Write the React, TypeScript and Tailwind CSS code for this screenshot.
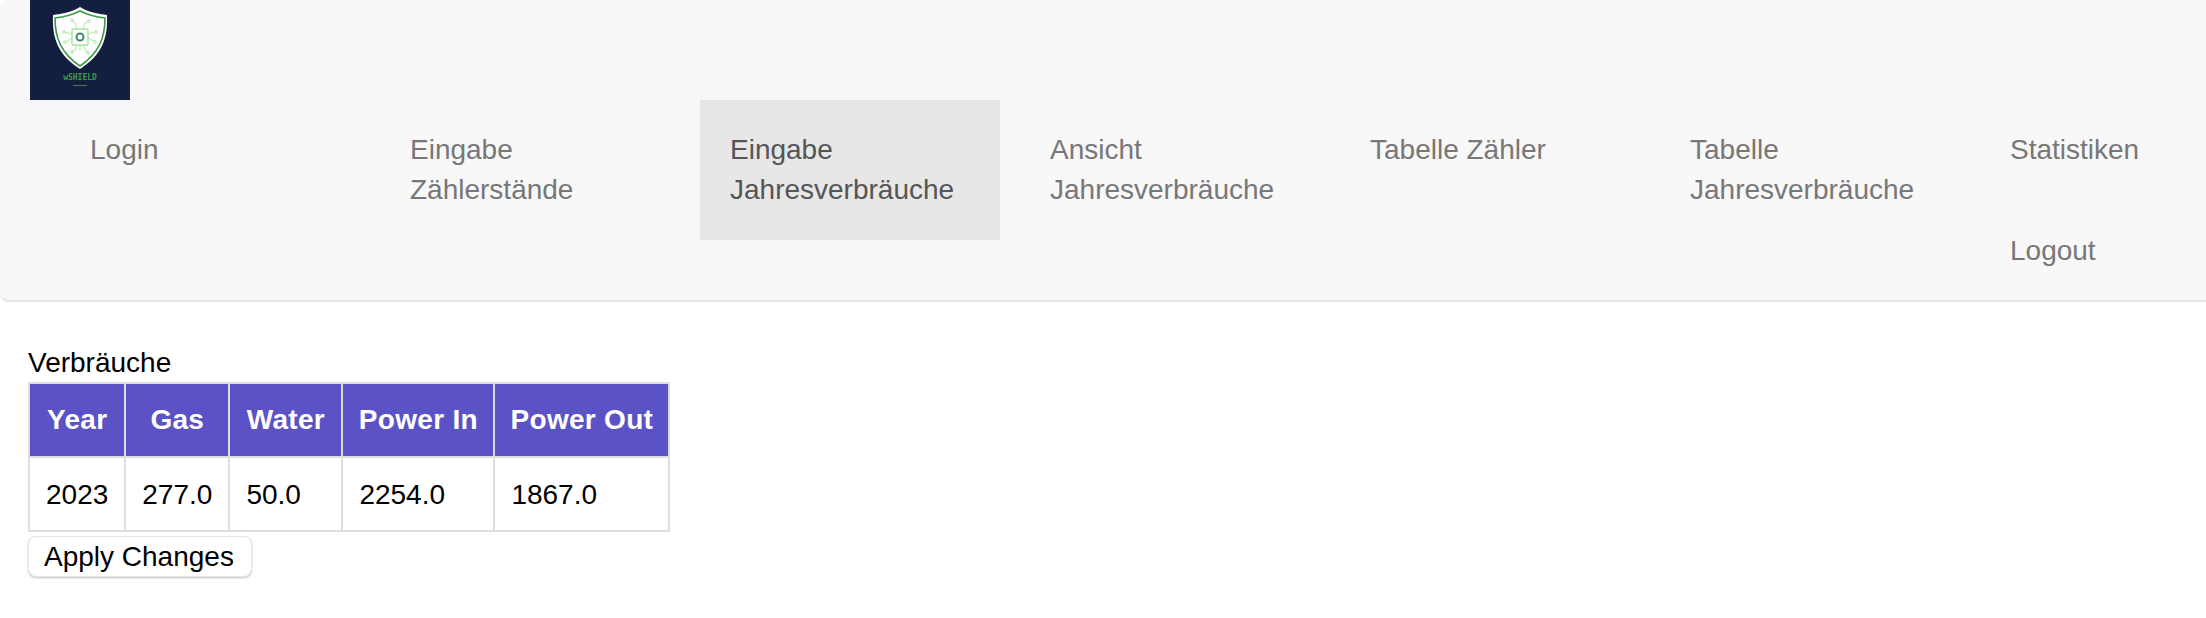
import React from 'react';

const navItems = [
  { label: 'Login' },
  { label: 'Eingabe Zählerstände' },
  { label: 'Eingabe Jahresverbräuche', active: true },
  { label: 'Ansicht Jahresverbräuche' },
  { label: 'Tabelle Zähler' },
  { label: 'Tabelle Jahresverbräuche' },
];

const columns = [
  { label: 'Year', width: 'w-[96px]' },
  { label: 'Gas', width: 'w-[104px]' },
  { label: 'Water', width: 'w-[113px]' },
  { label: 'Power In', width: 'w-[152px]' },
  { label: 'Power Out', width: 'w-[175px]' },
];
const values = ['2023', '277.0', '50.0', '2254.0', '1867.0'];

// drawn version of the shield logo
const Logo = () => (
  <svg viewBox="0 0 100 100" className="block w-[100px] h-[100px]">
    <rect width="100" height="100" fill="#141f3f" />
    <path d="M50 7 C58 12 68 14 77 15 C78 38 72 55 50 69 C28 55 22 38 23 15 C32 14 42 12 50 7Z" fill="#fff" />
    <path d="M50 11 C58 15 66 17 75 18 C75 38 69 53 50 66 C31 53 25 38 25 18 C34 17 42 15 50 11Z" fill="#fff" stroke="#3c9a4a" strokeWidth="1.6" />
    <g stroke="#a6e39a" strokeWidth="0.9" fill="none">
      <rect x="42" y="29" width="16" height="16" rx="1.5" strokeWidth="1.4" />
      <path d="M46 29 L46 24 L43 21 M54 29 L54 24 L58 22 M42 34 L35 32 M42 38 L36 42 M58 34 L65 32 M58 38 L64 41 M46 45 L46 49 L43 51 M50 45 L50 51 M54 45 L54 48 L57 52" />
      <circle cx="42" cy="20" r="1.4" />
      <circle cx="59" cy="21" r="1.4" />
      <circle cx="34" cy="32" r="1.4" />
      <circle cx="66" cy="32" r="1.4" />
      <circle cx="35" cy="42" r="1.4" />
      <circle cx="65" cy="42" r="1.4" />
      <circle cx="42" cy="52" r="1.4" />
      <circle cx="58" cy="53" r="1.4" />
    </g>
    <circle cx="50" cy="37" r="3.5" fill="none" stroke="#3f8a6a" strokeWidth="2" />
    <text x="50" y="80" textAnchor="middle" fontSize="8" fontWeight="bold" fill="#3c9a4a" fontFamily="'DejaVu Sans Mono', monospace">wSHIELD</text>
    <rect x="43" y="85" width="14" height="1" fill="#3c7a55" />
  </svg>
);

export default function App() {
  return (
    <div className="min-h-[618px] bg-white text-[28px] leading-[40px] text-black overflow-hidden font-['Liberation_Sans',Arial,sans-serif]">
      <nav className="h-[302px] w-[2230px] rounded-lg border-b-2 border-[#e7e7e7] bg-[#f8f8f8]">
        <div className="pl-[30px] h-[100px]">
          <Logo />
        </div>
        <ul className="flex gap-5 pl-[60px]">
          {navItems.map((item) => (
            <li key={item.label} className="w-[300px]">
              <a className={item.active ? 'block p-[30px] bg-[#e7e7e7] text-[#555]' : 'block p-[30px] text-[#777]'}>
                {item.label}
              </a>
            </li>
          ))}
          <li className="w-[190px]">
            <a className="block p-[30px] text-[#777]">Statistiken</a>
            <a className="block pt-[31px] px-[30px] pb-[29px] text-[#777]">Logout</a>
          </li>
        </ul>
      </nav>

      <div className="pl-[28px] pt-[41px]">
        <div className="h-[39px]">Verbräuche</div>
        <table className="border-collapse border-2 border-[#ddd]">
          <thead>
            <tr>
              {columns.map((c) => (
                <th key={c.label} className={`${c.width} whitespace-nowrap border-2 border-[#ddd] bg-[#5b52c5] px-0 py-4 text-center font-bold tracking-[0.3px] text-white`}>
                  {c.label}
                </th>
              ))}
            </tr>
          </thead>
          <tbody>
            <tr>
              {values.map((v) => (
                <td key={v} className="border-2 border-[#ddd] px-4 pt-[17px] pb-[15px] text-left">
                  {v}
                </td>
              ))}
            </tr>
          </tbody>
        </table>
        <button className="mt-1 block h-[41px] rounded-lg border border-[#e5e5e5] bg-white pl-[15px] pr-[17px] shadow-[0_1px_2px_rgba(0,0,0,0.25)]">
          Apply Changes
        </button>
      </div>
    </div>
  );
}
